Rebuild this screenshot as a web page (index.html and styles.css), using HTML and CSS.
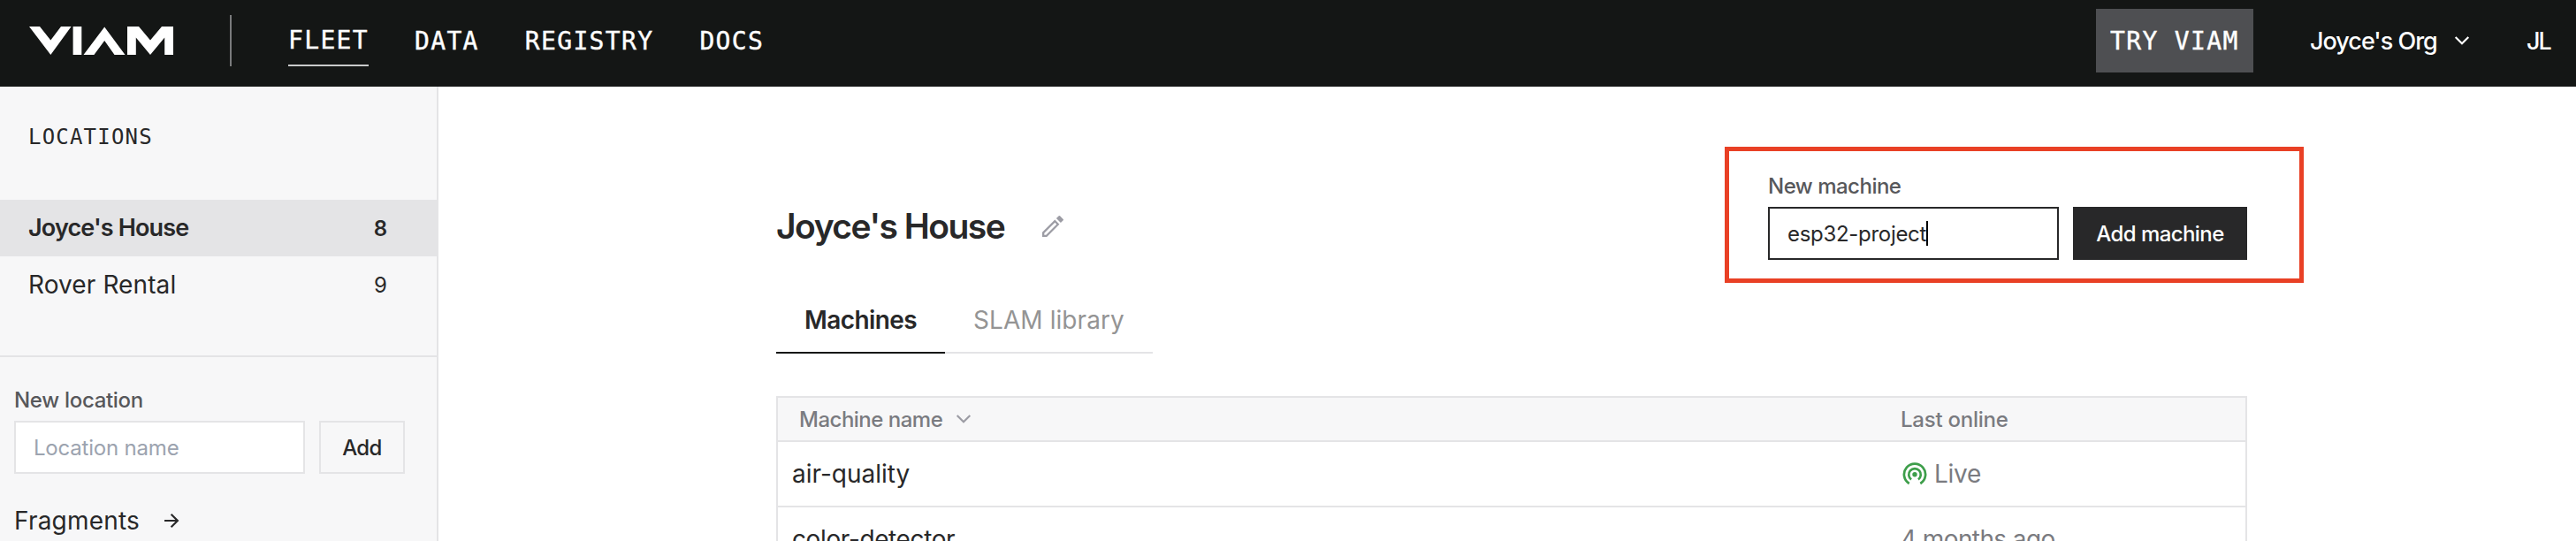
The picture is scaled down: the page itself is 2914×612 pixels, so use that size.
FILE: index.html
```html
<!DOCTYPE html>
<html lang="en">
<head>
<meta charset="utf-8">
<title>Fleet</title>
<link rel="stylesheet" href="styles.css">
</head>
<body>
<header class="topbar">
  <svg class="logo" width="164" height="32" viewBox="0 0 164 32" fill="#fff" aria-label="Viam">
    <path d="M0 0H12L24.3 15.6L36 0H47.6L24.3 32Z"/>
    <path d="M49.6 0H59.3V32H49.6Z"/>
    <path d="M61.5 32L85.2 0.4L108.5 32H96.5L85.2 16L73.4 32Z"/>
    <path d="M111 32V0H124L137 15.6L150 0H163V32H153.2V12.4L137 32L120.8 12.4V32Z"/>
  </svg>
  <div class="divider"></div>
  <nav class="nav">
    <a class="nav-link active">FLEET</a>
    <a class="nav-link">DATA</a>
    <a class="nav-link">REGISTRY</a>
    <a class="nav-link">DOCS</a>
  </nav>
  <button class="try">TRY VIAM</button>
  <div class="org">
    <span class="org-name">Joyce's Org</span>
    <svg width="18" height="12" viewBox="0 0 18 12" fill="none" stroke="#fff" stroke-width="2.2"><path d="M1.7 2L9 9.2L16.3 2"/></svg>
  </div>
  <span class="user">JL</span>
</header>
<div class="page">
  <aside class="sidebar">
    <h2 class="side-title">LOCATIONS</h2>
    <ul class="locations">
      <li class="location selected"><span class="loc-name">Joyce's House</span><span class="count">8</span></li>
      <li class="location"><span class="loc-name">Rover Rental</span><span class="count">9</span></li>
    </ul>
    <div class="side-form">
      <div class="label loc-label">New location</div>
      <div class="field-row">
        <div class="input placeholder">Location name</div>
        <button class="btn">Add</button>
      </div>
      <a class="fragments"><span>Fragments</span>
        <svg width="18" height="18" viewBox="0 0 18 18" fill="none" stroke="#282829" stroke-width="2.2"><path d="M1 9H16M8.6 1.7L15.9 9L8.6 16.3"/></svg>
      </a>
    </div>
  </aside>
  <main class="main">
    <div class="title-row">
      <div class="title-group">
        <h1 class="title">Joyce's House</h1>
        <svg class="pencil" width="26" height="26" viewBox="0 0 26 26" fill="#9c9ca4">
          <path fill-rule="evenodd" d="M1 25V19.7L15.3 5.6L20.4 10.7L6.2 25ZM3.3 22.8H5.3L17.3 10.7L15.3 8.7L3.3 20.7Z"/>
          <path d="M16.9 4.1L19.7 1.3Q20.4 0.6 21.1 1.3L24.7 4.9Q25.4 5.6 24.7 6.3L21.9 9.1Z"/>
        </svg>
      </div>
      <div class="machine-form">
        <div class="label">New machine</div>
        <div class="field-row">
          <div class="input focused"><span>esp32-project</span><i class="caret"></i></div>
          <button class="btn primary">Add machine</button>
        </div>
        <div class="highlight"></div>
      </div>
    </div>
    <div class="tabs">
      <div class="tab current">Machines</div>
      <div class="tab">SLAM library</div>
    </div>
    <div class="table">
      <div class="row head">
        <div class="name"><span>Machine name</span>
          <svg width="18" height="12" viewBox="0 0 18 12" fill="none" stroke="#9c9ca4" stroke-width="2.2"><path d="M1.7 2L9 9.2L16.3 2"/></svg>
        </div>
        <div class="online">Last online</div>
      </div>
      <div class="row">
        <div class="name">air-quality</div>
        <div class="online live">
          <svg width="28" height="26" viewBox="0 0 28 26" fill="none" stroke="#3d9e4a" stroke-width="2.7">
            <path d="M7.7 24A12.1 12.1 0 1 1 20.3 24"/>
            <path d="M10.1 19.4A6.8 6.8 0 1 1 17.9 19.4"/>
            <circle cx="14" cy="13.7" r="2.7" fill="#3d9e4a" stroke="none"/>
          </svg>
          <span>Live</span>
        </div>
      </div>
      <div class="row">
        <div class="name detector">color-detector</div>
        <div class="online ago">4 months ago</div>
      </div>
    </div>
  </main>
</div>
</body>
</html>
```
FILE: styles.css
```css
* { box-sizing: border-box; margin: 0; padding: 0; }
body {
  width: 2914px; height: 612px; overflow: hidden;
  background: #fff; color: #282829;
  font-family: Inter, "Liberation Sans", sans-serif; font-size: 28px; line-height: 40px;
  white-space: nowrap;
}
svg { display: block; flex: none; }
button { font: inherit; color: inherit; border: 0; white-space: nowrap; }

.topbar {
  display: flex; align-items: center; height: 98px;
  padding: 0 29px 6px 33px; background: #141615; color: #fff;
}
.divider { width: 2px; height: 58px; margin: 0 64px 0 63px; background: #7a7b7c; }
.nav { display: flex; gap: 52px; }
.nav-link, .try, .side-title {
  font-family: "DejaVu Sans Mono", monospace; font-size: 28px; letter-spacing: 1.34px;
}
.nav-link, .try { -webkit-text-stroke: .4px #fff; }
.nav-link { height: 58px; line-height: 60px; }
.nav-link.active { line-height: 58px; border-bottom: 2px solid #c9cacb; }
.try { margin-left: auto; width: 178px; height: 72px; padding: 2px 0 0 16px; text-align: left; background: #4e4f52; }
.org { display: flex; align-items: center; gap: 19px; width: 245px; margin-left: 64px; }
.org-name { font-size: 27px; font-weight: 500; letter-spacing: -1px; padding-top: 1px; }
.user { width: 27px; font-size: 27px; font-weight: 500; letter-spacing: -2px; padding-top: 1px; }

.page { display: flex; height: 514px; }
.sidebar { width: 496px; flex: none; background: #f7f7f8; border-right: 2px solid #e4e4e6; }
.side-title { padding: 41px 0 0 32px; height: 128px; line-height: 32px; font-size: 24px; font-weight: 400; letter-spacing: 1.2px; }
.locations { height: 178px; border-bottom: 2px solid #e4e4e6; list-style: none; }
.location { display: flex; align-items: center; justify-content: space-between; height: 64px; padding: 0 56px 0 32px; letter-spacing: .1px; }
.location.selected { margin-right: -2px; padding-right: 58px; background: #e4e4e6; font-weight: 600; }
.selected .loc-name { font-size: 27px; letter-spacing: -.85px; }
.count { font-size: 24px; letter-spacing: 0; padding-top: 1px; }
.side-form { padding: 32px 36px 0 16px; }
.label { height: 32px; padding-top: 1px; font-size: 24px; line-height: 32px; font-weight: 450; letter-spacing: -.5px; color: #57585b; margin-bottom: 8px; }
.loc-label { letter-spacing: -.3px; }
.field-row { display: flex; gap: 16px; }
.input {
  display: flex; align-items: center; width: 329px; height: 60px; padding: 1px 0 0 20px;
  background: #fff; border: 2px solid #e4e4e6; font-size: 24px; letter-spacing: -.3px;
}
.placeholder { color: #9ca3af; letter-spacing: -.2px; }
.focused { border-color: #282829; }
.caret { width: 2px; height: 28px; margin-bottom: 1px; background: #000; }
.btn { width: 97px; height: 60px; padding-top: 1px; background: #f7f7f8; border: 2px solid #e4e4e6; font-size: 24px; font-weight: 450; letter-spacing: -.6px; }
.btn.primary { width: 197px; background: #282829; border-color: #282829; color: #fff; font-weight: 500; letter-spacing: -.56px; }
.fragments { display: flex; align-items: center; gap: 27px; margin-top: 33px; letter-spacing: .2px; }

.main { width: 1664px; margin-left: 382px; }
.title-row { display: flex; justify-content: space-between; height: 228px; padding-top: 89px; }
.title-group { display: flex; align-items: center; gap: 42px; height: 138px; }
.title { font-size: 39px; font-weight: 600; letter-spacing: -1.5px; }
.machine-form { position: relative; width: 542px; padding-top: 7px; }
.highlight { position: absolute; left: -49px; top: -21px; width: 655px; height: 154px; border: 5px solid #e94025; }
.tabs { display: flex; }
.tab { height: 74px; line-height: 72px; padding-left: 32px; border-bottom: 2px solid #e4e4e6; width: 235px; color: #949494; letter-spacing: .07px; }
.tab.current { width: 191px; color: #282829; font-weight: 600; letter-spacing: -.6px; border-color: #141615; }
.table { margin-top: 48px; border: 2px solid #e4e4e6; border-bottom: 0; }
.row { display: flex; height: 74px; border-bottom: 2px solid #e4e4e6; line-height: 72px; }
.name { width: 1270px; padding-left: 16px; }
.detector { letter-spacing: -.38px; }
.online { color: #7a7b80; letter-spacing: -.25px; }
.ago { letter-spacing: -.6px; }
.live { display: flex; align-items: center; gap: 8px; padding-left: 2px; }
.head { height: 50px; line-height: 49px; background: #f7f7f8; font-size: 24px; font-weight: 450; color: #7a7b80; }
.head .name { display: flex; align-items: center; gap: 15px; padding-left: 24px; letter-spacing: -.5px; }
.head .online { letter-spacing: -.25px; }
```
